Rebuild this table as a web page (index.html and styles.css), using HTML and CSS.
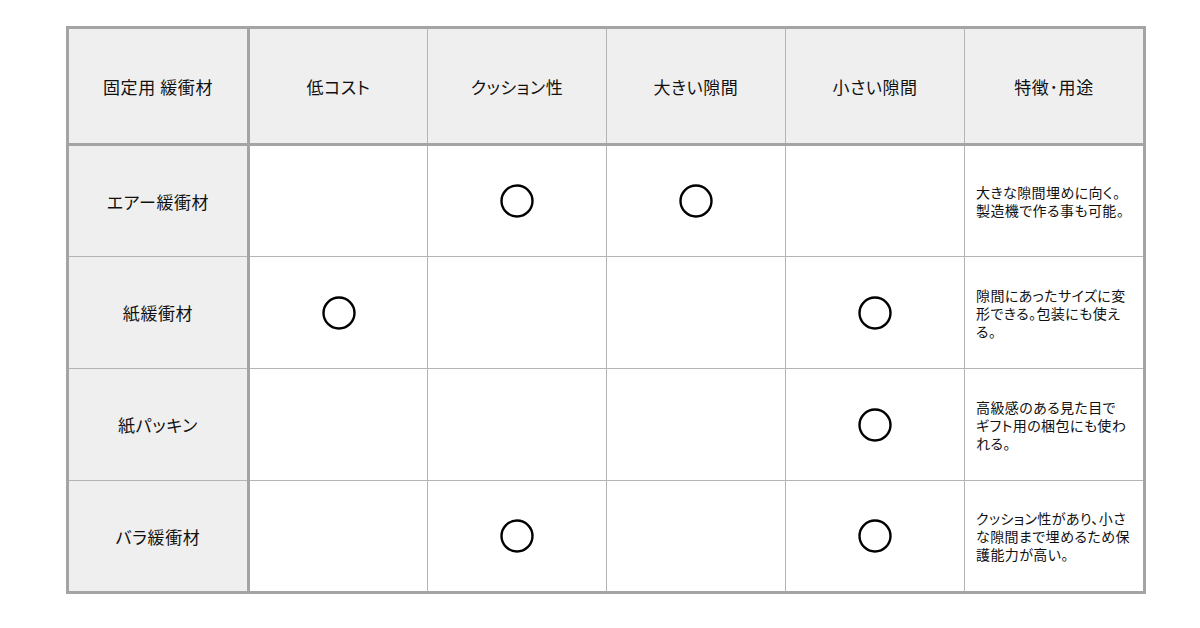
FILE: index.html
```html
<!DOCTYPE html>
<html lang="ja">
<head>
<meta charset="utf-8">
<link rel="stylesheet" href="styles.css">
</head>
<body>
<div class="wrap">
<table class="cmp">
  <colgroup>
    <col class="c1"><col class="cn"><col class="cn"><col class="cn"><col class="cn"><col class="cl">
  </colgroup>
  <thead>
    <tr>
      <th class="first">固定用 緩衝材</th>
      <th>低コスト</th>
      <th>クッション性</th>
      <th>大きい隙間</th>
      <th>小さい隙間</th>
      <th>特徴･用途</th>
    </tr>
  </thead>
  <tbody>
    <tr>
      <th class="first">エアー緩衝材</th>
      <td></td>
      <td><svg class="mark" viewBox="0 0 36 36"><circle cx="18" cy="18" r="15.5"/></svg></td>
      <td><svg class="mark" viewBox="0 0 36 36"><circle cx="18" cy="18" r="15.5"/></svg></td>
      <td></td>
      <td class="desc">大きな隙間埋めに向く。<br>製造機で作る事も可能。</td>
    </tr>
    <tr>
      <th class="first">紙緩衝材</th>
      <td><svg class="mark" viewBox="0 0 36 36"><circle cx="18" cy="18" r="15.5"/></svg></td>
      <td></td>
      <td></td>
      <td><svg class="mark" viewBox="0 0 36 36"><circle cx="18" cy="18" r="15.5"/></svg></td>
      <td class="desc">隙間にあったサイズに変<br>形できる。包装にも使え<br>る。</td>
    </tr>
    <tr>
      <th class="first">紙パッキン</th>
      <td></td>
      <td></td>
      <td></td>
      <td><svg class="mark" viewBox="0 0 36 36"><circle cx="18" cy="18" r="15.5"/></svg></td>
      <td class="desc">高級感のある見た目で<br>ギフト用の梱包にも使わ<br>れる。</td>
    </tr>
    <tr>
      <th class="first">バラ緩衝材</th>
      <td></td>
      <td><svg class="mark" viewBox="0 0 36 36"><circle cx="18" cy="18" r="15.5"/></svg></td>
      <td></td>
      <td><svg class="mark" viewBox="0 0 36 36"><circle cx="18" cy="18" r="15.5"/></svg></td>
      <td class="desc">クッション性があり、小さ<br>な隙間まで埋めるため保<br>護能力が高い。</td>
    </tr>
  </tbody>
</table>
</div>
</body>
</html>
```

FILE: styles.css
```css
html, body {
  margin: 0;
  padding: 0;
  background: #ffffff;
}
body {
  font-family: "Noto Sans CJK JP", "Noto Sans", sans-serif;
  color: #111111;
}
.wrap {
  padding: 26px 0 0 66px;
}
.cmp {
  border-collapse: collapse;
  table-layout: fixed;
  width: 1079px;
  border: 3px solid #a4a4a4;
}
.c1 { width: 181px; }
.cn { width: 179px; }
.cl { width: 180px; }
.cmp th,
.cmp td {
  border: 1px solid #b4b4b4;
  padding: 0;
  text-align: center;
  vertical-align: middle;
  font-weight: normal;
}
.cmp thead th {
  background: #efefef;
  font-size: 17px;
  letter-spacing: 0.6px;
  font-feature-settings: "palt";
  height: 114px;
  border-bottom: 3px solid #a4a4a4;
}
.cmp tbody tr {
  height: 112px;
}
.cmp th.first {
  background: #efefef;
  border-right: 3px solid #a4a4a4;
  font-size: 17px;
  letter-spacing: 0.6px;
  font-feature-settings: "palt";
}
.mark {
  display: block;
  width: 36px;
  height: 36px;
  margin: 0 auto;
}
.mark circle {
  fill: none;
  stroke: #000000;
  stroke-width: 2.4;
}
.cmp td.desc {
  text-align: left;
  font-size: 14px;
  line-height: 18px;
  letter-spacing: 0.4px;
  font-feature-settings: "palt";
  padding-left: 11px;
  white-space: nowrap;
}
```
